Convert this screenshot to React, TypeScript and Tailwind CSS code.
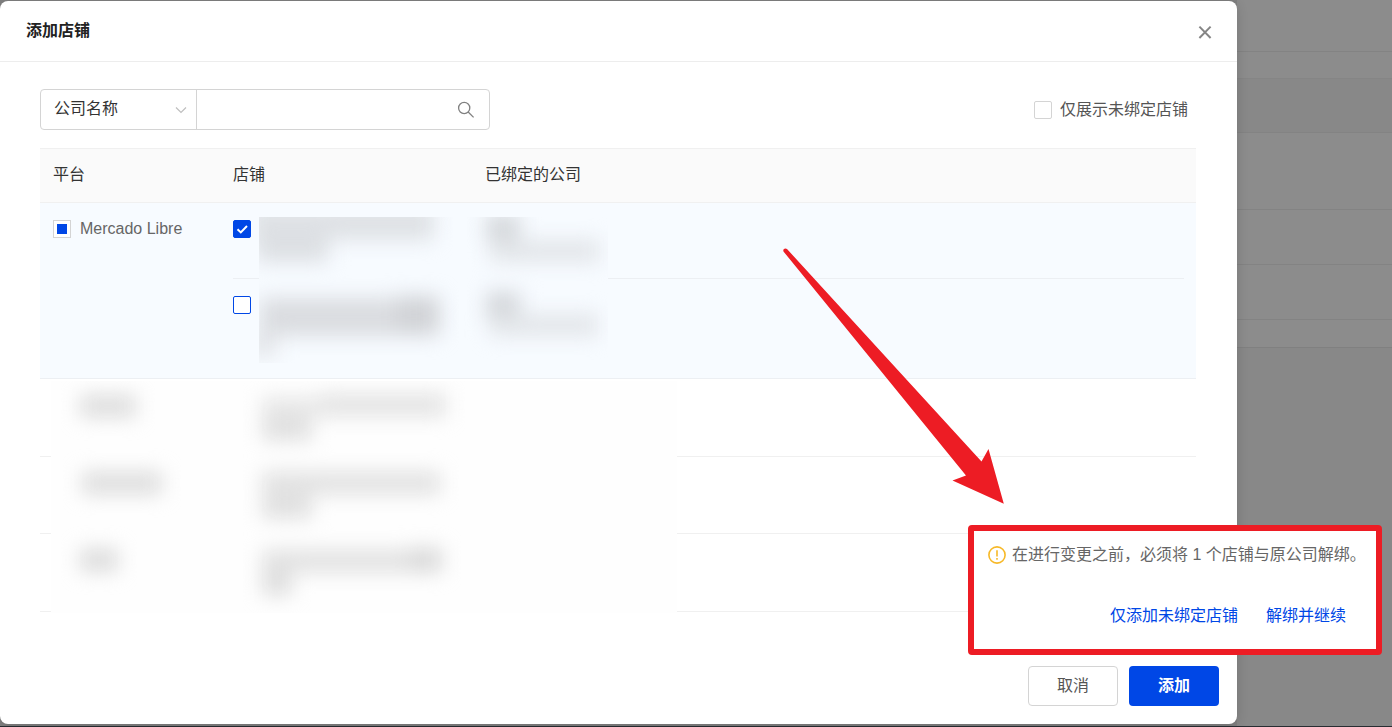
import React, { useState } from 'react';

interface Blob {
  x: number;
  y: number;
  w: number;
  h: number;
  color: string;
}

// Hidden store and company names inside the selected group
const groupBlobs: Blob[] = [
  { x: 250, y: 206, w: 184, h: 34, color: '#dee1e5' },
  { x: 256, y: 234, w: 72, h: 28, color: '#dcdfe3' },
  { x: 260, y: 298, w: 180, h: 38, color: '#dadce0' },
  { x: 396, y: 296, w: 42, h: 36, color: '#d1d3d7' },
  { x: 250, y: 334, w: 26, h: 22, color: '#e2e4e8' },
  { x: 486, y: 214, w: 34, h: 28, color: '#d5d8dc' },
  { x: 490, y: 240, w: 110, h: 22, color: '#e2e5e9' },
  { x: 486, y: 292, w: 34, h: 30, color: '#d3d6da' },
  { x: 490, y: 314, w: 108, h: 22, color: '#e2e5e9' }
];

// Hidden platform and store names in the other rows
const rowBlobs: Blob[] = [
  { x: 80, y: 395, w: 56, h: 22, color: '#dcdcdc' },
  { x: 262, y: 398, w: 184, h: 18, color: '#e4e4e4' },
  { x: 322, y: 394, w: 124, h: 22, color: '#e2e2e2' },
  { x: 262, y: 418, w: 50, h: 22, color: '#dedede' },
  { x: 82, y: 472, w: 80, h: 22, color: '#dcdcdc' },
  { x: 262, y: 472, w: 178, h: 22, color: '#e0e0e0' },
  { x: 262, y: 496, w: 50, h: 22, color: '#dedede' },
  { x: 80, y: 549, w: 38, h: 22, color: '#dadada' },
  { x: 262, y: 550, w: 178, h: 22, color: '#e0e0e0' },
  { x: 410, y: 548, w: 32, h: 24, color: '#d8d8d8' },
  { x: 262, y: 573, w: 30, h: 22, color: '#dcdcdc' }
];

const checkboxBase = 'block h-[18px] w-[18px] appearance-none border';

function Redacted({ id, viewBox, blobs }: { id: string; viewBox: string; blobs: Blob[] }) {
  return (
    <svg className="block h-full w-full" viewBox={viewBox} aria-hidden="true">
      <filter id={id} x="-20%" y="-20%" width="140%" height="140%" colorInterpolationFilters="sRGB">
        <feGaussianBlur stdDeviation="10" />
      </filter>
      <g filter={`url(#${id})`}>
        {blobs.map((b, i) => (
          <rect key={i} x={b.x} y={b.y} width={b.w} height={b.h} fill={b.color} />
        ))}
      </g>
    </svg>
  );
}

function StoreCheckbox({ label, defaultChecked }: { label: string; defaultChecked: boolean }) {
  const [checked, setChecked] = useState(defaultChecked);
  return (
    <span className="grid w-[18px]">
      <input
        type="checkbox"
        aria-label={label}
        checked={checked}
        onChange={(e) => setChecked(e.target.checked)}
        className={`${checkboxBase} col-start-1 row-start-1 rounded-xs border-[#0047e6] bg-white checked:bg-[#0047e6]`}
      />
      {checked && (
        <svg viewBox="0 0 18 18" className="pointer-events-none col-start-1 row-start-1 h-[18px] w-[18px]" fill="none">
          <path d="M4.5 9.2 7.8 12.4 14 6" stroke="#fff" strokeWidth="2" />
        </svg>
      )}
    </span>
  );
}

function Header() {
  return (
    <header className="flex h-[61px] items-center justify-between border-b border-[#ededed] pr-6 pl-[26px]">
      <h1 className="text-base font-bold text-[#222]">添加店铺</h1>
      <button aria-label="关闭" className="flex h-4 w-4 items-center justify-center">
        <svg viewBox="0 0 16 16" className="h-4 w-4" fill="none" stroke="#858585" strokeWidth="2">
          <path d="M2.4 3.6 13.6 15M13.6 3.6 2.4 15" />
        </svg>
      </button>
    </header>
  );
}

function Filters() {
  return (
    <div className="flex items-center justify-between">
      <div className="flex h-[41px] w-[450px] rounded-sm border border-[#d4d4d4]">
        <div className="grid w-[156px] items-center border-r border-[#d4d4d4]">
          <select
            aria-label="搜索类型"
            className="col-start-1 row-start-1 h-full appearance-none bg-transparent pb-0.5 pl-[13px] text-base text-[#333] outline-none"
          >
            <option>公司名称</option>
          </select>
          <svg viewBox="0 0 12 12" className="pointer-events-none col-start-1 row-start-1 mr-[9px] h-3 w-3 justify-self-end" fill="none" stroke="#bfbfbf">
            <path d="M1 3.5 6 8.5 11 3.5" strokeWidth="1.2" />
          </svg>
        </div>
        <input type="text" aria-label="公司名称" className="min-w-0 flex-1 px-3 text-base text-[#333] outline-none" />
        <button aria-label="搜索" className="flex w-[46px] items-center justify-center">
          <svg viewBox="0 0 18 18" className="h-[18px] w-[18px]" fill="none" stroke="#808080" strokeWidth="1.3">
            <circle cx="7.2" cy="7" r="5.6" />
            <path d="M11.2 11 16.6 16.4" />
          </svg>
        </button>
      </div>
      <label className="flex items-center gap-2 pr-2 text-base text-[#555]">
        <input type="checkbox" className={`${checkboxBase} rounded-xs border-[#d4d4d4] bg-white checked:bg-[#0047e6]`} />
        仅展示未绑定店铺
      </label>
    </div>
  );
}

function StoreTable() {
  return (
    <div className="relative mt-[18px]">
      <table className="w-full table-fixed border-separate border-spacing-0 text-left text-base text-[#333]">
        <colgroup>
          <col className="w-[193px]" />
          <col className="w-[252px]" />
          <col />
          <col className="w-3" />
        </colgroup>
        <thead>
          <tr className="h-[55px] bg-[#fafafa]">
            <th className="border-y border-[#f0f0f0] pb-0.5 pl-[13px] font-normal">平台</th>
            <th className="border-y border-[#f0f0f0] pb-0.5 font-normal">店铺</th>
            <th className="border-y border-[#f0f0f0] pb-0.5 font-normal">已绑定的公司</th>
            <td className="border-y border-[#f0f0f0]" />
          </tr>
        </thead>
        <tbody className="align-top">
          <tr className="h-[76px] bg-[#f7fbff]">
            <td rowSpan={2} className="border-b border-[#eceff3] pt-[14px] pl-[13px]">
              <label className="flex items-center gap-[9px] text-[#666]">
                <input
                  type="checkbox"
                  ref={(el) => {
                    if (el) el.indeterminate = true;
                  }}
                  className="grid h-[18px] w-[18px] appearance-none place-content-center border border-[#d4d4d4] bg-white before:h-[10px] before:w-[10px] before:bg-[#0047e6]"
                />
                Mercado Libre
              </label>
            </td>
            <td className="border-b border-[#eceff3] pt-[17px]">
              <StoreCheckbox label="店铺 1" defaultChecked={true} />
            </td>
            <td className="border-b border-[#eceff3]" />
            <td rowSpan={2} className="border-b border-[#eceff3]" />
          </tr>
          <tr className="h-[100px] bg-[#f7fbff]">
            <td className="border-b border-[#eceff3] pt-[17px]">
              <StoreCheckbox label="店铺 2" defaultChecked={false} />
            </td>
            <td className="border-b border-[#eceff3]" />
          </tr>
          {['h-[78px]', 'h-[77px]', 'h-[78px]'].map((height, i) => (
            <tr key={i} className={height}>
              <td className="border-b border-[#f0f0f0]" />
              <td className="border-b border-[#f0f0f0]" />
              <td className="border-b border-[#f0f0f0]" />
              <td className="border-b border-[#f0f0f0]" />
            </tr>
          ))}
        </tbody>
      </table>
      <div className="absolute top-[69px] left-[219px] h-[146px] w-[349px] overflow-hidden bg-[#f7fbff]">
        <Redacted id="blur-group" viewBox="259 217 349 146" blobs={groupBlobs} />
      </div>
      <div className="absolute top-[233px] left-[11px] h-[232px] w-[626px] overflow-hidden bg-[#fefefe]">
        <Redacted id="blur-rows" viewBox="51 381 626 232" blobs={rowBlobs} />
      </div>
    </div>
  );
}

// Rows of the page that stay visible behind the mask
function DimmedPage() {
  return (
    <div className="flex w-[155px] flex-col bg-[#888]">
      <div className="h-[52px] border-b border-[#838383] bg-[#8c8c8c]" />
      <div className="h-[27px] border-b border-[#858585] bg-[#8c8c8c]" />
      <div className="h-[54px] border-b border-[#838383] bg-[#888]" />
      <div className="h-[77px] border-b border-[#838383] bg-[#8c8c8c]" />
      <div className="h-[55px] border-b border-[#838383] bg-[#8c8c8c]" />
      <div className="h-[55px] border-b border-[#838383] bg-[#8c8c8c]" />
      <div className="h-7 border-b border-[#808080] bg-[#8c8c8c]" />
    </div>
  );
}

function UnbindPopover() {
  return (
    <div className="pointer-events-auto absolute right-[10px] bottom-[71px] flex h-[130px] w-[414px] flex-col justify-between rounded-sm border-6 border-[#ed1c24] bg-white pt-3 pb-[21px] pl-[14px]">
      <p className="flex items-center gap-[6px] text-base whitespace-nowrap text-[#666]">
        <svg viewBox="0 0 18 18" className="h-[18px] w-[18px] shrink-0" fill="none">
          <circle cx="9" cy="9" r="8.1" stroke="#f7b928" strokeWidth="1.6" />
          <path d="M9 4.2V10.6M9 12V13.8" stroke="#f7b928" strokeWidth="1.6" />
        </svg>
        在进行变更之前，必须将 1 个店铺与原公司解绑。
      </p>
      <div className="flex justify-end gap-7 pr-[30px] text-base text-[#0047e6]">
        <button>仅添加未绑定店铺</button>
        <button>解绑并继续</button>
      </div>
    </div>
  );
}

export default function App() {
  return (
    <div
      lang="zh-CN"
      className="relative flex min-h-screen flex-col border-b border-[#282d32] bg-[#808080] font-['Liberation_Sans','Noto_Sans_CJK_SC',sans-serif]"
    >
      <div className="flex flex-1">
        <div role="dialog" aria-label="添加店铺" className="z-10 mt-px mb-0.5 flex min-w-0 flex-1 flex-col rounded-lg bg-white shadow-[0_2px_12px_rgba(0,0,0,0.15)]">
          <Header />
          <main className="flex-1 pt-[27px] pr-[41px] pl-10">
            <Filters />
            <StoreTable />
          </main>
          <footer className="flex justify-end gap-[11px] pr-[18px] pb-[18px] text-base">
            <button className="h-10 w-[90px] rounded-sm border border-[#d4d4d4] bg-white text-[#555]">取消</button>
            <button className="h-10 w-[90px] rounded-sm bg-[#0047e6] font-bold text-white">添加</button>
          </footer>
        </div>
        <DimmedPage />
      </div>

      <div className="pointer-events-none absolute inset-0 z-20">
        <svg viewBox="0 0 224 260" className="absolute right-[386px] bottom-[219px] h-[260px] w-[224px]" fill="#ed1c24">
          <path d="M1.5 4.5C0.5 2.5 3 0.5 5 2L199.5 214.5 206.5 202 221.8 256.8 170.5 233.5 184 228.5Z" />
        </svg>
        <UnbindPopover />
      </div>
    </div>
  );
}
